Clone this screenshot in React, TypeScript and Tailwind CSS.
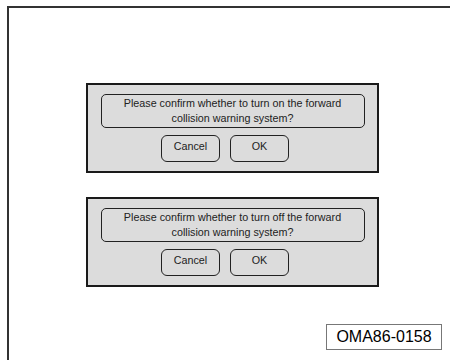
import React from 'react';

const Dialog = ({ line1, line2 }: { line1: string; line2: string }) => {
  return (
    <div className="ml-[77px] w-[293px] h-[90px] border-2 border-[#1a1a1a] bg-[#dcdcdc] pt-[9px]">
      <div className="mx-auto w-[264px] h-[34px] rounded-[5px] border border-[#222] pt-[1px] text-center text-[10.75px] leading-[15px] text-[#222]">
        {line1}
        <br />
        {line2}
      </div>
      <div className="ml-[73px] mt-[7px] flex gap-[10px]">
        <div className="w-[59px] h-[27px] rounded-[6px] border border-[#222] pt-[3px] text-center text-[10.75px] leading-[14px] text-[#222]">
          Cancel
        </div>
        <div className="w-[59px] h-[27px] rounded-[6px] border border-[#222] pt-[3px] text-center text-[10.75px] leading-[14px] text-[#222]">
          OK
        </div>
      </div>
    </div>
  );
};

const App = () => {
  return (
    <div className="w-[450px] h-[360px] bg-white pt-[6px] pl-[7px] overflow-hidden" style={{ fontFamily: '"Liberation Sans", Arial, sans-serif' }}>
      <div className="h-[360px] border-t-2 border-l-2 border-[#333] pt-[75px]">
        <Dialog line1="Please confirm whether to turn on the forward" line2="collision warning system?" />
        <div className="h-[24px]" />
        <Dialog line1="Please confirm whether to turn off the forward" line2="collision warning system?" />
        <div className="flex justify-end pr-[8px] mt-[37px]">
          <div className="w-[116px] h-[26px] border border-[#777] text-center text-[16px] leading-[24px] text-black">
            OMA86-0158
          </div>
        </div>
      </div>
    </div>
  );
};

export default App;
